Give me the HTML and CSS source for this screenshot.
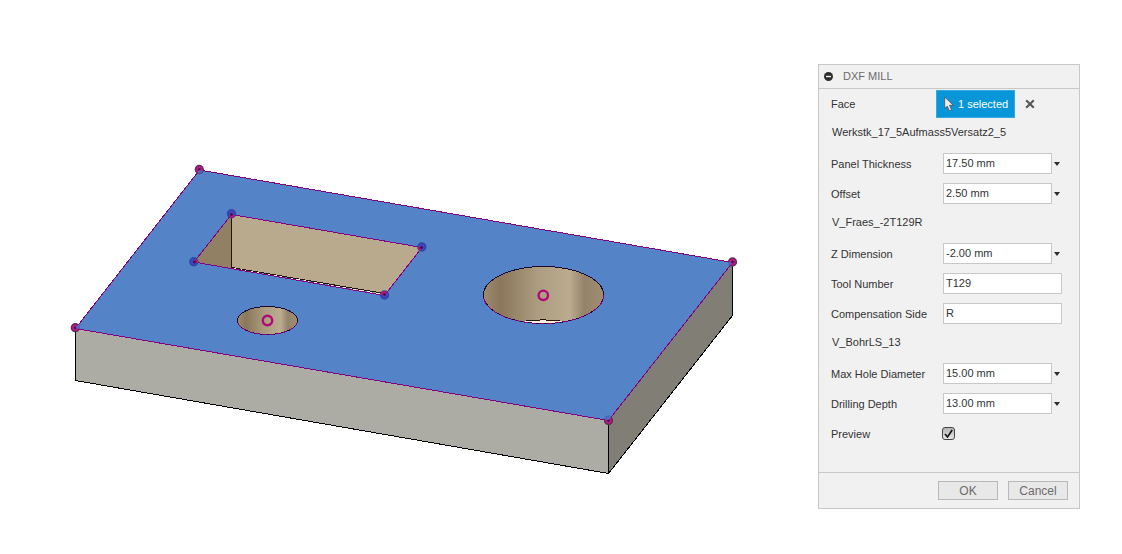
FILE: index.html
```html
<!DOCTYPE html>
<html lang="en">
<head>
<meta charset="utf-8">
<title>DXF Mill</title>
<link rel="stylesheet" href="styles.css">
</head>
<body>
<main class="workspace">
  <svg class="viewport" viewBox="0 0 818 554" role="img" aria-label="Panel with a rectangular pocket and two holes">
    <defs>
      <linearGradient id="bore">
        <stop offset="0" stop-color="#9d8b6f"/>
        <stop offset=".14" stop-color="#8b775a"/>
        <stop offset=".45" stop-color="#ac9c80"/>
        <stop offset=".72" stop-color="#bbab8f"/>
        <stop offset=".84" stop-color="#94836a"/>
        <stop offset="1" stop-color="#a18e70"/>
      </linearGradient>
      <clipPath id="boreClip"><ellipse cx="543.5" cy="295" rx="60" ry="28.5"/></clipPath>
      <g id="vertex">
        <circle r="3.9" fill="#c0148c" stroke="#573052" stroke-width="1.5"/>
        <circle r="1.3" fill="#3a1040"/>
      </g>
      <g id="inner">
        <circle r="3.9" fill="#4b3fc0" stroke="#294b9f" stroke-width="1.6"/>
      </g>
    </defs>
    <g stroke-linejoin="round" shape-rendering="crispEdges">
      <path d="M75.500 328.500L608.500 420.500V473.500L75.500 380.500Z" fill="#acaca5" stroke="#000"/>
      <path d="M608.500 420.500L732.500 262.500V315.500L608.500 473.500Z" fill="#817e75" stroke="#000"/>
      <path d="M199.500 170L732.500 262.500L608.500 420.500L75.500 328.500Z" fill="#5483c7" stroke="#830083"/>
      <path d="M231.500 214.500L422 247.500L384.500 294.500L231.500 267.500Z" fill="#b9a98d"/>
      <path d="M231.500 214.500V268.500L194 262Z" fill="#928065"/>
      <path d="M231.500 214.500V267.500L384.500 293.500" fill="none" stroke="#211306"/>
      <path d="M233 268.500L384 294.500" stroke="#fff0dc" stroke-dasharray="5 3"/>
      <path d="M231.500 214.500L422 247.500L384.500 295.500L194 262Z" fill="none" stroke="#830083"/>
      <ellipse cx="543.500" cy="295" rx="60" ry="28.500" fill="url(#bore)"/>
      <path d="M525 320.500H537L543 319.500L549 320.500H562V325H525Z" fill="#ffeddc" clip-path="url(#boreClip)"/>
      <path d="M526 320.500H537L543 319.500L549 320.500H560" fill="none" stroke="#211306"/>
      <ellipse cx="267.500" cy="320.500" rx="30" ry="14" fill="url(#bore)"/>
      <g fill="none">
        <ellipse cx="543.500" cy="295" rx="60" ry="28.500" stroke="#830083"/>
        <path d="M483.500 295A60 28.500 0 0 1 603.500 295" stroke="#1b0830"/>
        <path d="M483.500 295A60 28.500 0 0 0 603.500 295" stroke="#1b0830" stroke-dasharray="3 5"/>
        <ellipse cx="267.500" cy="320.500" rx="30" ry="14" stroke="#830083"/>
        <path d="M237.500 320.500A30 14 0 0 1 297.500 320.500" stroke="#1b0830"/>
        <path d="M237.500 320.500A30 14 0 0 0 297.500 320.500" stroke="#1b0830" stroke-dasharray="2 5"/>
      </g>
    </g>
    <g fill="none" stroke="#b30878" stroke-width="2.400">
      <circle cx="543.300" cy="295.300" r="4.700"/>
      <circle cx="267.500" cy="320.500" r="4.700"/>
    </g>
    <use href="#vertex" x="199.300" y="169.500"/>
    <use href="#vertex" x="732.500" y="262"/>
    <use href="#vertex" x="608.500" y="420.500"/>
    <use href="#vertex" x="75.300" y="327.700"/>
    <path d="M199.500 170L203 171A4 4 0 0 1 197.500 173ZM732 263L728 262A4 4 0 0 0 729.500 265.500ZM608.500 420L604.500 419.500A4 4 0 0 1 611.500 417ZM75.500 328L78.500 324.500A4 4 0 0 1 79.500 329Z" fill="#4b6bc8"/>
    <use href="#inner" x="231.500" y="213.700"/>
    <use href="#inner" x="193.800" y="261.700"/>
    <use href="#inner" x="421.800" y="247"/>
    <use href="#inner" x="384.500" y="295"/>
    <g fill="#c00f70">
      <path d="M231.500 214L235 215.500A4 4 0 0 1 229 217Z"/>
      <path d="M193.500 262.500L196.500 259A4 4 0 0 1 198 263Z"/>
      <path d="M422.500 247L418 246.500A4 4 0 0 0 419.500 250.500Z"/>
      <path d="M384.500 296L380.500 294.500A4 4 0 0 1 387 292Z"/>
    </g>
    <g fill="#2a103c">
      <circle cx="231.500" cy="214.500" r="1.300"/>
      <circle cx="194.500" cy="262" r="1.300"/>
      <circle cx="421.500" cy="247.500" r="1.300"/>
      <circle cx="384.500" cy="294.500" r="1.300"/>
    </g>
  </svg>

  <form class="panel">
    <header class="panel-head">
      <button class="collapse" type="button" aria-label="Collapse">
        <svg width="9" height="9" viewBox="0 0 9 9"><circle cx="4.500" cy="4.500" r="4.500" fill="#2d2d2d"/><path d="M2 4.500H7" stroke="#f1f1f1" stroke-width="1.400"/></svg>
      </button>
      <h1 class="title">DXF MILL</h1>
    </header>
    <div class="fields">
      <div class="row">
        <label class="name" for="face">Face</label>
        <div class="face">
          <button class="selected" id="face" type="button">
            <svg width="10" height="16" viewBox="0 0 10 16"><path d="M.700 1V12.500L3.300 10.200L5.400 14.800L7.600 13.800L5.500 9.300H9.300Z" fill="#eee" stroke="#4d5961" stroke-width=".900" stroke-linejoin="round"/></svg>
            <span>1 selected</span>
          </button>
          <button class="clear" type="button" aria-label="Clear selection">
            <svg width="10" height="10" viewBox="0 0 10 10"><path d="M1.200 1.200L8.800 8.800M8.800 1.200L1.200 8.800" stroke="#595959" stroke-width="2.200"/></svg>
          </button>
        </div>
      </div>
      <h2 class="group">Werkstk_17_5Aufmass5Versatz2_5</h2>
      <div class="row">
        <label class="name" for="thickness">Panel Thickness</label>
        <div class="value"><input class="text" id="thickness" value="17.50 mm"><button class="more" type="button" aria-label="Panel Thickness options"></button></div>
      </div>
      <div class="row">
        <label class="name" for="offset">Offset</label>
        <div class="value"><input class="text" id="offset" value="2.50 mm"><button class="more" type="button" aria-label="Offset options"></button></div>
      </div>
      <h2 class="group">V_Fraes_-2T129R</h2>
      <div class="row">
        <label class="name" for="zdim">Z Dimension</label>
        <div class="value"><input class="text" id="zdim" value="-2.00 mm"><button class="more" type="button" aria-label="Z Dimension options"></button></div>
      </div>
      <div class="row">
        <label class="name" for="tool">Tool Number</label>
        <div class="value"><input class="text" id="tool" value="T129"></div>
      </div>
      <div class="row">
        <label class="name" for="side">Compensation Side</label>
        <div class="value"><input class="text" id="side" value="R"></div>
      </div>
      <h2 class="group">V_BohrLS_13</h2>
      <div class="row">
        <label class="name" for="diameter">Max Hole Diameter</label>
        <div class="value"><input class="text" id="diameter" value="15.00 mm"><button class="more" type="button" aria-label="Max Hole Diameter options"></button></div>
      </div>
      <div class="row">
        <label class="name" for="depth">Drilling Depth</label>
        <div class="value"><input class="text" id="depth" value="13.00 mm"><button class="more" type="button" aria-label="Drilling Depth options"></button></div>
      </div>
      <div class="row">
        <label class="name" for="preview">Preview</label>
        <div class="check">
          <input class="box" id="preview" type="checkbox" checked>
          <svg class="tick" width="13" height="13" viewBox="0 0 13 13"><path d="M3 7L5.500 10L10.200 3" fill="none" stroke="#111" stroke-width="1.600"/></svg>
        </div>
      </div>
    </div>
    <footer class="actions">
      <button class="action" type="submit">OK</button>
      <button class="action" type="button">Cancel</button>
    </footer>
  </form>
</main>
</body>
</html>
```
FILE: styles.css
```css
* { box-sizing: border-box; }

body {
  margin: 0;
  background: #fff;
  color: #333;
  font: 11px/14px "Liberation Sans", Arial, sans-serif;
}

button, input { font: inherit; color: inherit; margin: 0; }

button { padding: 0; border: 0; background: none; }

.workspace {
  display: flex;
  align-items: flex-start;
  padding-right: 42px;
}

.viewport {
  display: block;
  flex: 1;
  min-width: 0;
}

.panel {
  flex: none;
  width: 262px;
  margin: 64px 0 16px;
  border: 1px solid #c8c8c8;
  background: #f1f1f1;
}

.panel-head {
  display: flex;
  align-items: center;
  gap: 10px;
  height: 24px;
  padding: 0 0 1px 5px;
  border-bottom: 1px solid #c8c8c8;
}

.collapse, .clear { display: flex; }

.title, .group { margin: 0; font-size: 11px; font-weight: normal; }

.title { color: #6b6b6b; }

.fields { padding: 0 12px 23px; }

.row {
  display: grid;
  grid-template-columns: 112px 1fr;
  align-items: center;
  height: 30px;
}

.group {
  height: 30px;
  padding: 6px 1px 0;
}

.face {
  display: flex;
  align-items: center;
  gap: 10px;
  margin-left: -7px;
}

.selected {
  display: flex;
  align-items: center;
  gap: 4px;
  width: 79px;
  height: 28px;
  padding-left: 7px;
  border: 1px solid #35a9e2;
  background: #0896d9;
  color: #fff;
  white-space: nowrap;
}

.value {
  display: flex;
  align-items: center;
  width: 119px;
  padding-bottom: 1px;
}

.text {
  flex: 1;
  min-width: 0;
  height: 21px;
  padding: 0 2px 1px;
  border: 1px solid #c8c8c8;
  border-radius: 0;
  background: #fff;
}

.more {
  display: flex;
  justify-content: center;
  width: 10px;
}

.more::before {
  content: "";
  border: solid transparent;
  border-width: 4px 3px 0;
  border-top-color: #2d2d2d;
}

.check {
  display: grid;
  width: 13px;
  margin-left: -1px;
  padding-bottom: 1px;
}

.box, .tick { grid-area: 1 / 1; }

.box {
  appearance: none;
  width: 13px;
  height: 13px;
  border: 1px solid #444;
  border-radius: 3px;
  background: linear-gradient(#b5b5b5, #e8e8e8);
}

.tick { visibility: hidden; pointer-events: none; }

.box:checked + .tick { visibility: visible; }

.actions {
  display: flex;
  justify-content: flex-end;
  gap: 10px;
  padding: 8px 11px;
  border-top: 1px solid #c8c8c8;
}

.action {
  width: 60px;
  height: 19px;
  border: 1px solid #b8b8b8;
  background: #e8e8e8;
  color: #6b6b6b;
  font-size: 12px;
}
```
